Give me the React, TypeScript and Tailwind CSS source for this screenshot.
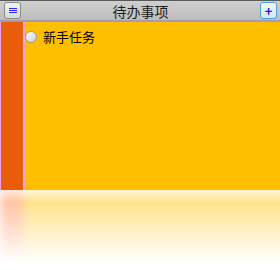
export default function App() {
  return (
    <div
      className="w-[280px] h-[270px] bg-white flex flex-col overflow-hidden"
      style={{ fontFamily: '"Noto Sans CJK SC", "Noto Sans", sans-serif' }}
    >
      {/* title bar */}
      <div className="h-[22px] shrink-0 flex items-center justify-between pl-[4px] pr-[3px] border-t border-[#5a5a5a] border-b-2 border-b-[#a898b0] bg-gradient-to-b from-[#cfcfcf] to-[#bdbdbd]">
        <button className="w-[17px] h-[17px] rounded-[3px] border border-[#8a8a8a] bg-gradient-to-b from-[#f4f4f4] to-[#d8d8d8] flex flex-col items-center justify-center gap-[1px]">
          <span className="block w-[8px] h-[1px] bg-[#2a2af0]" />
          <span className="block w-[8px] h-[1px] bg-[#2a2af0]" />
          <span className="block w-[8px] h-[1px] bg-[#2a2af0]" />
        </button>
        <span className="text-[14px] leading-none text-[#1a1a1a] pt-[1px]">待办事项</span>
        <button className="w-[17px] h-[17px] rounded-[3px] border border-[#4aa0e0] bg-gradient-to-b from-[#f4f8fc] to-[#d8e4ee] flex items-center justify-center text-[#1a1ae0] text-[13px] font-bold leading-none">
          +
        </button>
      </div>

      {/* content */}
      <div className="h-[168px] shrink-0 flex">
        <div className="w-[1px] bg-[#f0a0e8]" />
        <div className="w-[22px] bg-[#e85c0a]" />
        <div className="w-[2px] bg-[#ffa8d0]" />
        <div className="flex-1 bg-[#ffbf00] pt-[8px]">
          <div className="flex items-center gap-[6px]">
            <span className="w-[12px] h-[12px] rounded-full border border-[#9a9a9a] bg-gradient-to-br from-white to-[#cfcfcf]" />
            <span className="text-[13px] text-black leading-none">新手任务</span>
          </div>
        </div>
      </div>

      {/* reflection */}
      <div className="relative flex-1 overflow-hidden bg-white">
        <div className="absolute -top-[6px] left-0 -right-[12px] bottom-0 flex opacity-50 blur-[5px]">
          <div className="w-[23px] bg-[#ff8a50]" />
          <div className="flex-1 bg-[#ffc820]" />
        </div>
        <div className="absolute inset-0 bg-gradient-to-b from-white/60 via-transparent via-[16%] to-white to-[90%]" />
      </div>
    </div>
  );
}
